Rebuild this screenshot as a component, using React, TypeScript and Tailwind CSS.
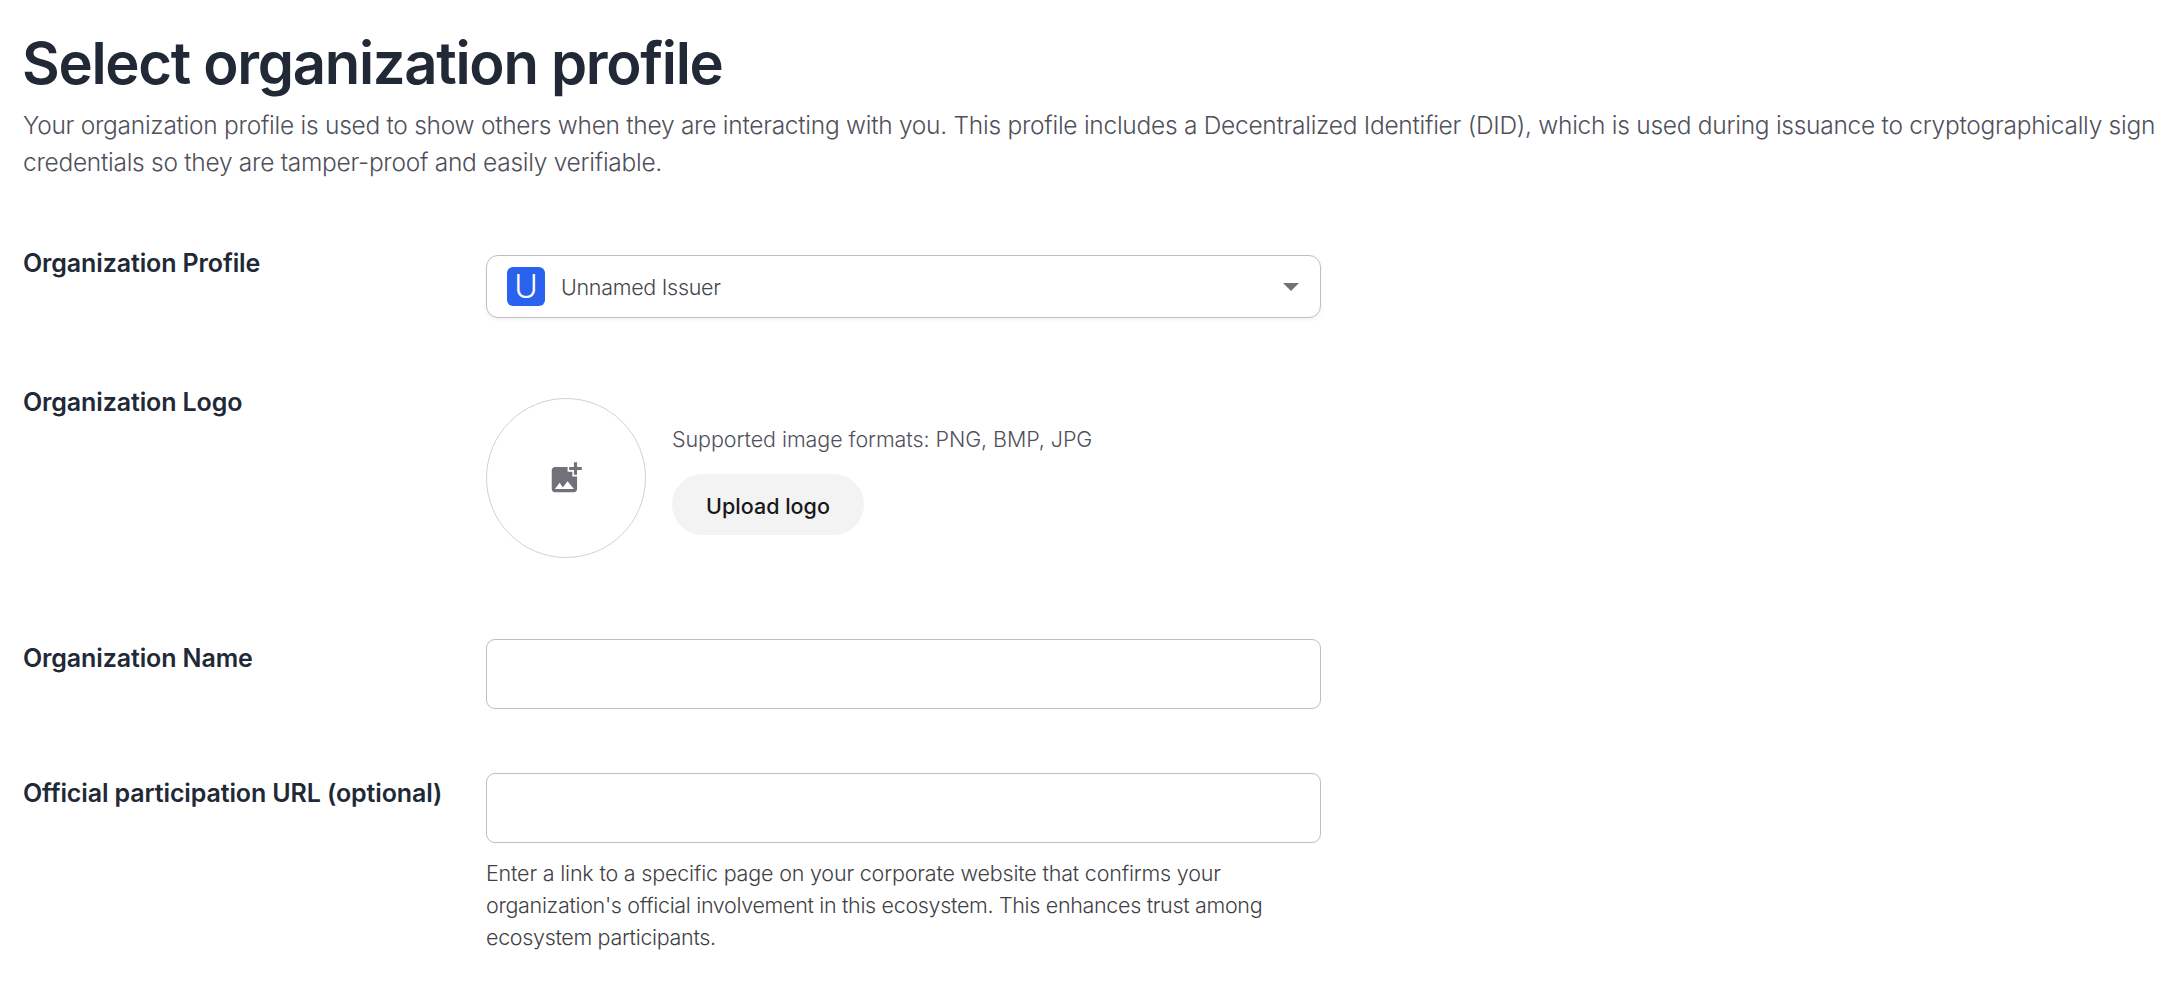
import React from 'react';
import { MdAddPhotoAlternate } from 'react-icons/md';

function Row({
  label,
  labelClass = '',
  className = '',
  children,
}: {
  label: string;
  labelClass?: string;
  className?: string;
  children: React.ReactNode;
}) {
  return (
    <div className={`flex items-start ${className}`}>
      <div
        className={`w-[463px] shrink-0 whitespace-nowrap text-[25px] leading-8 font-semibold tracking-[-0.12px] text-[#212936] ${labelClass}`}
      >
        {label}
      </div>
      {children}
    </div>
  );
}

export default function App() {
  return (
    <main className="min-h-screen bg-white pt-[31px] pl-[23px] font-['Inter',sans-serif]">
      <h1 className="-ml-px text-[58px] leading-16 font-semibold tracking-[-1.3px] text-[#212936]">
        Select organization profile
      </h1>
      <p className="mt-3 whitespace-nowrap text-[24.5px] leading-[37px] font-light text-[#50505b]">
        <span className="block tracking-[-0.272px]">
          Your organization profile is used to show others when they are interacting with you. This
          profile includes a Decentralized Identifier (DID), which is used during issuance to
          cryptographically sign
        </span>
        <span className="block tracking-[-0.28px]">
          credentials so they are tamper-proof and easily verifiable.
        </span>
      </p>

      <Row label="Organization Profile" className="mt-[66px]">
        <button
          type="button"
          className="mt-2 flex h-[63px] w-[835px] items-center rounded-[12px] border border-[#bfbfc0] bg-white pr-[21px] pl-5 shadow-[0_2px_4px_rgba(0,0,0,0.05)]"
        >
          <span className="flex h-[39px] w-[38px] items-center justify-center rounded-[6px] bg-[#2962ef] text-[32px] leading-none font-light text-white">
            U
          </span>
          <span className="ml-[16px] pt-0.5 text-[21.5px] font-light tracking-[-0.3px] text-[#45454c]">
            Unnamed Issuer
          </span>
          <svg className="ml-auto" width="16" height="8" viewBox="0 0 16 8" fill="#737373">
            <path d="M0 0h16L8 8z" />
          </svg>
        </button>
      </Row>

      <Row label="Organization Logo" className="mt-[68px]">
        <div className="mt-3 flex">
          <div className="flex size-40 items-center justify-center rounded-full border border-[#d1d1d2]">
            <MdAddPhotoAlternate size={38} color="#71717b" />
          </div>
          <div className="ml-[26px] pt-[29px]">
            <div className="text-[21.5px] leading-6 font-light tracking-[-0.07px] text-[#50505b]">
              Supported image formats: PNG, BMP, JPG
            </div>
            <button
              type="button"
              className="mt-[23px] flex h-[61px] w-48 items-center justify-center rounded-full bg-[#f3f3f3] pt-[3px] text-[21.5px] font-medium text-[#18181b]"
            >
              Upload logo
            </button>
          </div>
        </div>
      </Row>

      <Row label="Organization Name" className="mt-[81px]" labelClass="mt-[3px]">
        <input
          aria-label="Organization Name"
          className="h-[70px] w-[835px] rounded-[9px] border border-[#bfbfc0] px-5 text-[21.5px]"
        />
      </Row>

      <Row label="Official participation URL (optional)" className="mt-16" labelClass="mt-1">
        <div>
          <input
            aria-label="Official participation URL"
            className="block h-[70px] w-[835px] rounded-[9px] border border-[#bfbfc0] px-5 text-[21.5px]"
          />
          <p className="mt-[14px] text-[21.5px] leading-8 font-light whitespace-nowrap text-[#3f3f46]">
            <span className="block tracking-[-0.19px]">
              Enter a link to a specific page on your corporate website that confirms your
            </span>
            <span className="block tracking-[-0.33px]">
              organization's official involvement in this ecosystem. This enhances trust among
            </span>
            <span className="block tracking-[-0.33px]">ecosystem participants.</span>
          </p>
        </div>
      </Row>
    </main>
  );
}
